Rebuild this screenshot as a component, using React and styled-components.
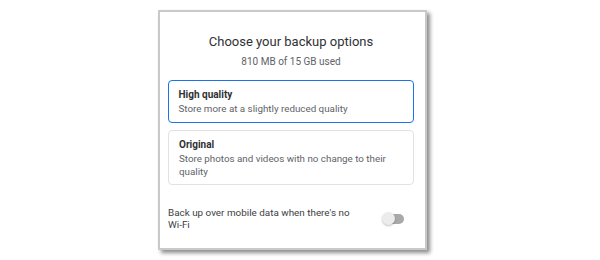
import React from "react";
import styled, { createGlobalStyle } from "styled-components";

const GlobalStyle = createGlobalStyle`
  body {
    margin: 0;
    background: #ffffff;
    font-family: Roboto, "Liberation Sans", sans-serif;
  }
`;

const Page = styled.div`
  width: 600px;
  height: 260px;
  padding: 10px 0 0 158px;
  box-sizing: border-box;
  background: #fff;
`;

const Card = styled.main`
  width: 269px;
  height: 240px;
  box-sizing: border-box;
  background: #fff;
  border: 2px solid #c9c9c9;
  box-shadow: 3px 3px 4px rgba(0, 0, 0, 0.45);
  padding: 22px 11px 0 8px;
  display: flex;
  flex-direction: column;
`;

const Title = styled.h1`
  margin: 0;
  font-size: 13px;
  line-height: 16px;
  font-weight: 400;
  color: #303134;
  text-align: center;
`;

const Usage = styled.p`
  margin: 5px 0 0;
  font-size: 10px;
  line-height: 14px;
  color: #5f6368;
  text-align: center;
`;

const Options = styled.div`
  display: flex;
  flex-direction: column;
  gap: 7px;
  margin-top: 11px;
`;

const Option = styled.div`
  box-sizing: border-box;
  min-height: ${(p) => (p.$selected ? "43px" : "53px")};
  padding: 7px 10px 6px;
  border-radius: 4px;
  border: ${(p) => (p.$selected ? "1.5px solid #1a73e8" : "1px solid #e2e2e2")};
  padding-left: ${(p) => (p.$selected ? "9.5px" : "10px")};
`;

const OptionName = styled.div`
  font-size: 10px;
  line-height: 14px;
  font-weight: 700;
  color: #303134;
`;

const OptionText = styled.div`
  font-size: 9.8px;
  line-height: 13px;
  color: #5f6368;
`;

const SettingRow = styled.div`
  display: flex;
  align-items: center;
  gap: 14px;
  margin-top: 22px;
  padding: 0 10px 0 0;
`;

const SettingLabel = styled.div`
  flex: 1;
  max-width: 196px;
  font-size: 9.9px;
  line-height: 12px;
  color: #3c4043;
`;

const Track = styled.div`
  position: relative;
  width: 21px;
  height: 10px;
  border-radius: 5px;
  background: #a9a9a9;
  flex-shrink: 0;
  margin-left: auto;
`;

const Thumb = styled.div`
  position: absolute;
  left: -1px;
  top: -2px;
  width: 13px;
  height: 13px;
  border-radius: 50%;
  background: #ececec;
  box-shadow: 0 1px 2px rgba(0, 0, 0, 0.25);
`;

const Toggle = () => (
  <Track>
    <Thumb />
  </Track>
);

export default function App() {
  return (
    <>
      <GlobalStyle />
      <Page>
        <Card>
          <Title>Choose your backup options</Title>
          <Usage>810 MB of 15 GB used</Usage>
          <Options>
            <Option $selected>
              <OptionName>High quality</OptionName>
              <OptionText>Store more at a slightly reduced quality</OptionText>
            </Option>
            <Option>
              <OptionName>Original</OptionName>
              <OptionText>
                Store photos and videos with no change to their quality
              </OptionText>
            </Option>
          </Options>
          <SettingRow>
            <SettingLabel>
              Back up over mobile data when there's no Wi-Fi
            </SettingLabel>
            <Toggle />
          </SettingRow>
        </Card>
      </Page>
    </>
  );
}
